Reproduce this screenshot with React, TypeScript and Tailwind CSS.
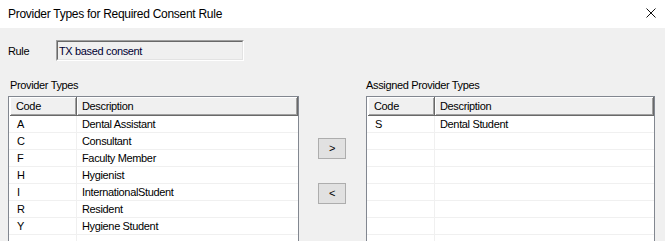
import React from "react";

const leftRows: [string, string][] = [
  ["A", "Dental Assistant"],
  ["C", "Consultant"],
  ["F", "Faculty Member"],
  ["H", "Hygienist"],
  ["I", "InternationalStudent"],
  ["R", "Resident"],
  ["Y", "Hygiene Student"],
  ["", ""],
];

const rightRows: [string, string][] = [
  ["S", "Dental Student"],
  ["", ""],
  ["", ""],
  ["", ""],
  ["", ""],
  ["", ""],
  ["", ""],
  ["", ""],
];

function ListView({ rows, width }: { rows: [string, string][]; width: string }) {
  return (
    <div className={`${width} h-[160px] border border-[#828790] bg-white overflow-hidden`}>
      <div className="flex h-[19px] pl-px">
        <div className="w-[67px] h-full bg-[#f0f0f0] shadow-[inset_-1px_-1px_0_#696969,inset_1px_1px_0_#ffffff,inset_-2px_-2px_0_#a0a0a0] pl-[6px] leading-[18px]">
          Code
        </div>
        <div className="flex-1 h-full bg-[#f0f0f0] shadow-[inset_-1px_-1px_0_#696969,inset_1px_1px_0_#ffffff,inset_-2px_-2px_0_#a0a0a0] pl-[5px] leading-[18px]">
          Description
        </div>
      </div>
      {rows.map((r, i) => (
        <div key={i} className="flex h-[17px] border-b border-[#f0f0f0] pl-px">
          <div className="w-[67px] h-full border-r border-[#f0f0f0] pl-[7px] leading-[17px]">{r[0]}</div>
          <div className="flex-1 h-full pl-[5px] leading-[17px]">{r[1]}</div>
        </div>
      ))}
    </div>
  );
}

export default function App() {
  return (
    <div
      className="w-[665px] h-[241px] overflow-hidden bg-[#f0f0f0] text-black text-[11px] tracking-[-0.35px]"
      style={{ fontFamily: '"Liberation Sans", Arial, sans-serif' }}
    >
      <div className="h-[28px] bg-white flex items-center justify-between pl-2 pr-[9px]">
        <span className="text-[12px] tracking-[-0.28px]">Provider Types for Required Consent Rule</span>
        <svg width="10" height="10" viewBox="0 0 10 10" className="mt-[-2px]">
          <path d="M0.5 0.5 L9.5 9.5 M9.5 0.5 L0.5 9.5" stroke="#111" strokeWidth="1" fill="none" />
        </svg>
      </div>

      <div className="pl-2 pt-[12px]">
        <div className="flex items-center h-[21px]">
          <span className="w-[48px] pt-[2px]">Rule</span>
          <div className="w-[188px] h-[21px] bg-[#f0f0f0] border-t border-l border-[#a0a0a0] border-r border-b border-r-white border-b-white">
            <div className="h-full border-t border-l border-[#696969] border-r border-b border-r-[#e3e3e3] border-b-[#e3e3e3] pl-px pt-px leading-[16px] text-[#000033]">
              TX based consent
            </div>
          </div>
        </div>

        <div className="flex mt-[17px]">
          <div className="flex flex-col">
            <div className="h-[18px] pl-[2px] leading-[15px]">Provider Types</div>
            <ListView rows={leftRows} width="w-[291px]" />
          </div>

          <div className="flex flex-col ml-[19px] pt-[60px] gap-[24px]">
            <button className="w-[28px] h-[21px] bg-[#e1e1e1] border border-[#adadad] leading-[19px] text-center">&gt;</button>
            <button className="w-[28px] h-[21px] bg-[#e1e1e1] border border-[#adadad] leading-[19px] text-center">&lt;</button>
          </div>

          <div className="flex flex-col ml-[20px]">
            <div className="h-[18px] leading-[15px]">Assigned Provider Types</div>
            <ListView rows={rightRows} width="w-[289px]" />
          </div>
        </div>
      </div>
    </div>
  );
}
